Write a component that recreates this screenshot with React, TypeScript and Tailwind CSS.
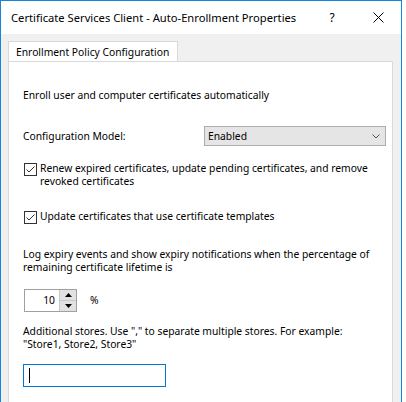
import React from "react";

const font = { fontFamily: '"Noto Sans", "Open Sans", sans-serif' };

function CheckBox() {
  return (
    <span className="mt-[1px] flex h-[13px] w-[13px] shrink-0 items-center justify-center border border-[#333333] bg-white">
      <svg width="11" height="11" viewBox="0 0 11 11">
        <path d="M1.5 5.5 L4 8 L9.5 2.5" fill="none" stroke="#333333" strokeWidth="1" />
      </svg>
    </span>
  );
}

function Spinner({ value }: { value: string }) {
  return (
    <div className="flex h-[23px] w-[53px] border border-[#a0a0a0] bg-white">
      <div className="flex flex-1 items-center justify-end pr-[4px] text-black">{value}</div>
      <div className="flex w-[17px] flex-col border-l border-[#c8c8c8] bg-[#f0f0f0]">
        <div className="flex flex-1 items-center justify-center border-b border-[#c8c8c8] bg-[#e1e1e1]">
          <svg width="7" height="4" viewBox="0 0 7 4">
            <path d="M0 4 L3.5 0 L7 4 Z" fill="#000" />
          </svg>
        </div>
        <div className="flex flex-1 items-center justify-center bg-[#e1e1e1]">
          <svg width="7" height="4" viewBox="0 0 7 4">
            <path d="M0 0 L3.5 4 L7 0 Z" fill="#000" />
          </svg>
        </div>
      </div>
    </div>
  );
}

export default function App() {
  return (
    <div className="h-[402px] w-[406px] overflow-hidden bg-white text-[10.3px] leading-[13px] text-black" style={font}>
      <div className="flex h-full w-[402px] flex-col border-l border-r border-t border-[#1883d7]">
        {/* title bar */}
        <div className="flex h-[33px] shrink-0 items-center bg-white pl-[10px] text-[11.2px]">
          <span className="flex-1">Certificate Services Client - Auto-Enrollment Properties</span>
          <span className="w-[46px] text-center text-[12px]">?</span>
          <span className="flex w-[46px] items-center justify-center">
            <svg width="11" height="11" viewBox="0 0 11 11">
              <path d="M0.5 0.5 L10.5 10.5 M10.5 0.5 L0.5 10.5" stroke="#000" strokeWidth="1" />
            </svg>
          </span>
        </div>

        {/* body */}
        <div className="flex flex-1 flex-col bg-[#f0f0f0] pl-[7px] pr-[8px] pt-[7px]">
          <div className="flex">
            <div className="-mb-px flex h-[21px] items-center border border-b-0 border-[#d9d9d9] bg-white pl-[7px] pr-[8px]">
              Enrollment Policy Configuration
            </div>
          </div>
          <div className="flex flex-1 flex-col border border-b-0 border-[#d9d9d9] bg-white pl-[14px] pr-[6px] pt-[27px]">
            <p>Enroll user and computer certificates automatically</p>

            <div className="mt-[24px] flex h-[20px] items-center">
              <span className="w-[181px]">Configuration Model:</span>
              <div className="flex h-[20px] flex-1 items-center border border-[#adadad] bg-[#e5e5e5] pl-[3px] pr-[5px]">
                <span className="flex-1">Enabled</span>
                <svg width="8" height="5" viewBox="0 0 8 5">
                  <path d="M0.5 0.5 L4 4 L7.5 0.5" fill="none" stroke="#555" strokeWidth="1" />
                </svg>
              </div>
            </div>

            <div className="mt-[16px] flex gap-[3px] pl-[1px]">
              <CheckBox />
              <p>
                Renew expired certificates, update pending certificates, and remove
                <br />
                revoked certificates
              </p>
            </div>

            <div className="mt-[22px] flex gap-[3px] pl-[1px]">
              <CheckBox />
              <p>Update certificates that use certificate templates</p>
            </div>

            <p className="mt-[24px]">
              Log expiry events and show expiry notifications when the percentage of
              <br />
              remaining certificate lifetime is
            </p>

            <div className="mt-[15px] flex items-center gap-[13px] pl-[1px]">
              <Spinner value="10" />
              <span>%</span>
            </div>

            <p className="mt-[13px]">
              Additional stores. Use "," to separate multiple stores. For example:
              <br />
              "Store1, Store2, Store3"
            </p>

            <div className="mt-[13px] flex h-[23px] w-[143px] items-center border border-[#0078d7] pl-[5px]">
              <span className="h-[15px] w-px bg-black" />
            </div>
          </div>
        </div>
      </div>
    </div>
  );
}
